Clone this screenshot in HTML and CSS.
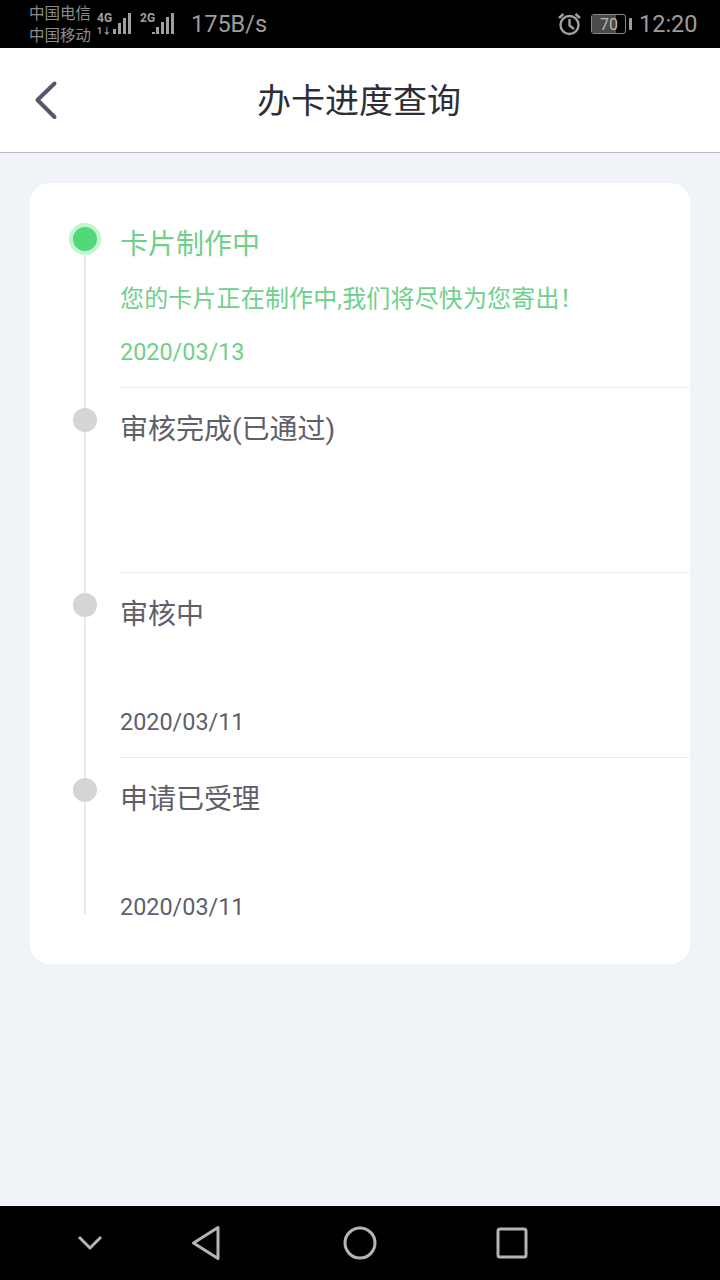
FILE: index.html
```html
<!DOCTYPE html>
<html lang="zh-CN">
<head>
    <meta charset="UTF-8">
    <meta name="viewport" content="width=device-width, initial-scale=1.0">
    <title>办卡进度查询</title>
    <link rel="stylesheet" href="styles.css">
</head>
<body>
    <div class="phone">
        <div class="status-bar">
            <div class="carriers">
                <span>中国电信</span>
                <span>中国移动</span>
            </div>
            <svg class="signal-one" width="36" height="24" viewBox="0 0 36 24">
                <text class="net-label" x="1" y="10">4G</text>
                <text class="net-sub" x="1" y="22">1↓</text>
                <rect x="17" y="17" width="3" height="5"/>
                <rect x="22" y="11" width="3" height="11"/>
                <rect x="27" y="6" width="3" height="16"/>
                <rect x="32" y="1" width="3" height="21"/>
            </svg>
            <svg class="signal-two" width="36" height="24" viewBox="0 0 36 24">
                <text class="net-label" x="1" y="10">2G</text>
                <rect x="13" y="20" width="3" height="2"/>
                <rect x="17" y="15" width="3" height="7"/>
                <rect x="22" y="10" width="3" height="12"/>
                <rect x="27" y="5" width="3" height="17"/>
                <rect x="32" y="1" width="3" height="21"/>
            </svg>
            <span class="speed">175B/s</span>
            <svg class="alarm" width="24" height="24" viewBox="0 0 24 24">
                <circle cx="12.5" cy="13" r="9"/>
                <path d="M12.5 7V13.5L17 17"/>
                <path d="M2 6L6.5 2M23 6L18.5 2"/>
            </svg>
            <div class="battery">
                <div class="battery-body">
                    <div class="battery-fill"></div>
                    <span class="battery-num">70</span>
                </div>
                <div class="battery-tip"></div>
            </div>
            <span class="clock">12:20</span>
        </div>

        <header class="top-bar">
            <svg class="back" width="24" height="40" viewBox="0 0 24 40">
                <path d="M20.5 3.5L3.5 20L20.5 37"/>
            </svg>
            <h1>办卡进度查询</h1>
            <div></div>
        </header>

        <main class="content">
            <section class="card">
                <div class="step step-current">
                    <div class="rail"><div class="dot"></div></div>
                    <div class="step-body">
                        <div class="step-title">卡片制作中</div>
                        <div class="step-msg">您的卡片正在制作中,我们将尽快为您寄出！</div>
                        <div class="step-date">2020/03/13</div>
                    </div>
                </div>
                <div class="step">
                    <div class="rail"><div class="dot"></div></div>
                    <div class="step-body">
                        <div class="step-title">审核完成(已通过)</div>
                    </div>
                </div>
                <div class="step">
                    <div class="rail"><div class="dot"></div></div>
                    <div class="step-body">
                        <div class="step-title">审核中</div>
                        <div class="step-date">2020/03/11</div>
                    </div>
                </div>
                <div class="step step-last">
                    <div class="rail"><div class="dot"></div></div>
                    <div class="step-body">
                        <div class="step-title">申请已受理</div>
                        <div class="step-date">2020/03/11</div>
                    </div>
                </div>
            </section>
        </main>

        <nav class="nav-bar">
            <svg class="nav-down" width="26" height="16" viewBox="0 0 26 16">
                <path d="M2 2L13 13L24 2"/>
            </svg>
            <svg class="nav-back" width="30" height="36" viewBox="0 0 30 36">
                <path d="M27 2.5V33.5L2.5 18Z"/>
            </svg>
            <svg class="nav-home" width="34" height="34" viewBox="0 0 34 34">
                <circle cx="17" cy="17" r="15"/>
            </svg>
            <svg class="nav-recent" width="32" height="32" viewBox="0 0 32 32">
                <rect x="2" y="2" width="28" height="28" rx="2"/>
            </svg>
        </nav>
    </div>
</body>
</html>
```

FILE: styles.css
```css
* {
    box-sizing: border-box;
}

body {
    margin: 0;
    font-family: Roboto, "Noto Sans CJK SC", sans-serif;
    background-color: #000;
}

.phone {
    width: 720px;
    height: 1280px;
    display: flex;
    flex-direction: column;
    overflow: hidden;
}

/* status bar */
.status-bar {
    height: 48px;
    flex-shrink: 0;
    background-color: #000;
    color: #9c9c9c;
    display: flex;
    align-items: center;
    padding-left: 29px;
}

.carriers {
    width: 67px;
    padding-top: 2px;
    display: flex;
    flex-direction: column;
    font-size: 15.5px;
    line-height: 22px;
    color: #8c8c8c;
}

.signal-one,
.signal-two {
    fill: #a0a0a0;
    flex-shrink: 0;
}

.signal-two {
    margin-left: 7px;
}

.net-label {
    font-size: 12px;
    font-weight: 700;
}

.net-sub {
    font-size: 9px;
    font-weight: 700;
}

.speed {
    margin-left: 16px;
    font-size: 23.5px;
    width: 366px;
    flex-shrink: 0;
}

.alarm {
    fill: none;
    stroke: #a0a0a0;
    stroke-width: 2.4;
    flex-shrink: 0;
}

.battery {
    margin-left: 10px;
    display: flex;
    align-items: center;
    gap: 3px;
}

.battery-body {
    width: 35px;
    height: 20px;
    border: 1.5px solid #8a8a8a;
    border-radius: 3px;
    display: flex;
    align-items: center;
    position: relative;
}

.battery-fill {
    width: 72%;
    height: 100%;
    background-color: #4a4a4a;
}

.battery-num {
    position: absolute;
    left: 8px;
    font-size: 16px;
    line-height: 17px;
    color: #b8b8b8;
}

.battery-tip {
    width: 3px;
    height: 12px;
    background-color: #a0a0a0;
    border-radius: 1px;
}

.clock {
    margin-left: 7px;
    font-size: 23.5px;
}

/* top bar */
.top-bar {
    height: 105px;
    flex-shrink: 0;
    background-color: #fff;
    border-bottom: 1px solid #bcc0c4;
    display: grid;
    grid-template-columns: 1fr auto 1fr;
    align-items: center;
    padding-left: 34px;
    padding-right: 36px;
}

.top-bar h1 {
    margin: 0 0 4px;
    font-size: 34px;
    font-weight: 400;
    color: #2e2e38;
}

.back {
    fill: none;
    stroke: #55566a;
    stroke-width: 4;
    stroke-linecap: round;
    stroke-linejoin: round;
}

/* page content */
.content {
    flex: 1;
    background-color: #f0f4f9;
    padding: 30px;
}

.card {
    background-color: #fff;
    border-radius: 20px;
    padding: 20px 1px 21px 40px;
}

.step {
    height: 185px;
    display: flex;
}

.rail {
    width: 30px;
    flex-shrink: 0;
    display: flex;
    flex-direction: column;
    align-items: center;
    background: linear-gradient(#e9e9e9, #e9e9e9) center top / 2px 100% no-repeat;
}

.dot {
    width: 24px;
    height: 24px;
    flex-shrink: 0;
    margin-top: 20px;
    border-radius: 50%;
    background-color: #d5d5d5;
}

.step-current .rail {
    background-position: center bottom;
    background-size: 2px 148px;
}

.step-current .dot {
    width: 32px;
    height: 32px;
    margin-top: 20px;
    background-color: #4fd97a;
    border: 4px solid #c4f3d2;
}

.step-last .rail {
    background-size: 2px 156px;
}

.step-body {
    flex: 1;
    margin-left: 20px;
    padding-bottom: 17px;
    border-bottom: 1px solid #ebebeb;
    display: flex;
    flex-direction: column;
    color: #5f5f6a;
}

.step-last .step-body {
    border-bottom: none;
    padding-bottom: 18px;
}

.step-title {
    margin-top: 17px;
    font-size: 28px;
    line-height: 50px;
}

.step-msg {
    margin-top: 11px;
    font-size: 24px;
    letter-spacing: 0.15px;
    line-height: 36px;
}

.step-date {
    margin-top: auto;
    font-size: 23.4px;
    line-height: 36px;
}

.step-current .step-body {
    color: #6fd08c;
}

/* nav bar */
.nav-bar {
    height: 74px;
    flex-shrink: 0;
    background-color: #000;
    display: flex;
    align-items: center;
    padding-left: 77px;
}

.nav-bar svg {
    fill: none;
    stroke: #b4b4b4;
    stroke-width: 3;
    stroke-linejoin: round;
}

.nav-back {
    margin-left: 88px;
}

.nav-home {
    margin-left: 122px;
}

.nav-recent {
    margin-left: 119px;
}
```
